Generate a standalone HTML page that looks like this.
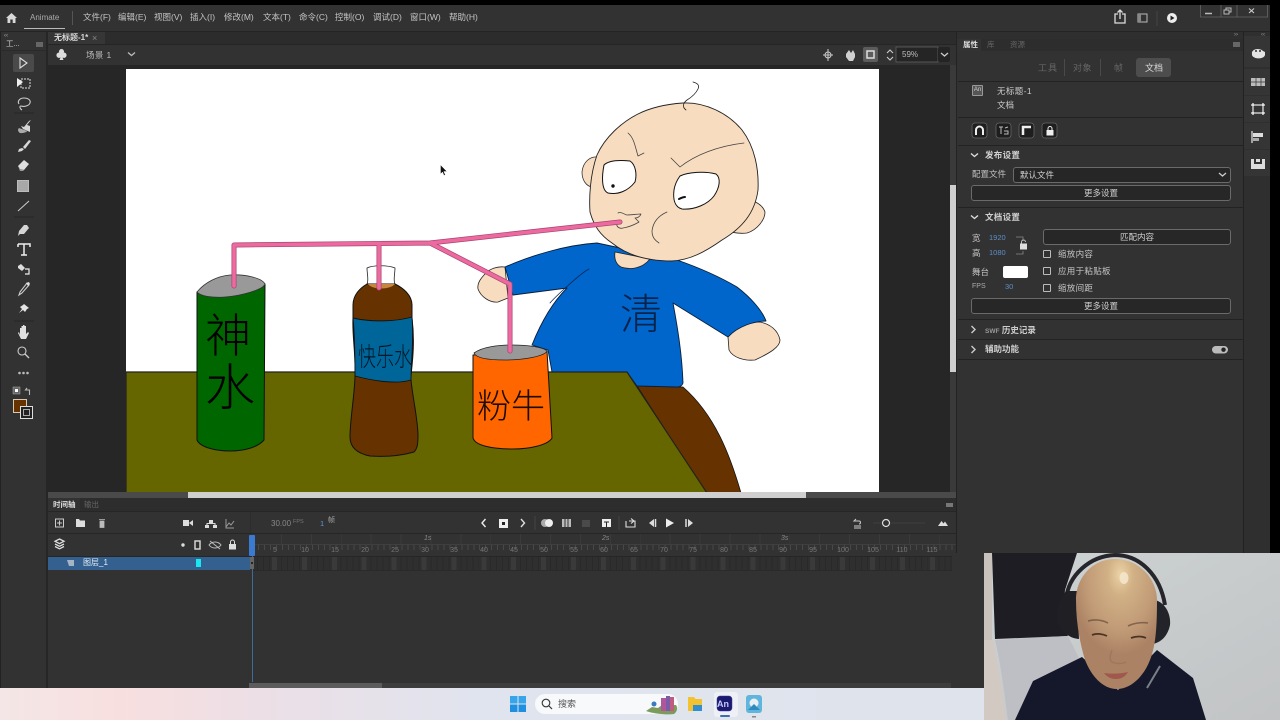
<!DOCTYPE html>
<html><head><meta charset="utf-8"><style>
html,body{margin:0;padding:0;width:1280px;height:720px;overflow:hidden;background:#000}
#r{position:relative;width:1280px;height:720px;overflow:hidden;background:#323232;font-family:"Liberation Sans","Noto Sans CJK SC",sans-serif;filter:blur(.35px)}
.b{position:absolute}
.t{position:absolute;white-space:nowrap;font-size:8.5px;line-height:12px;color:#c4c4c4}
.s{position:absolute;background:#222;height:1px;left:958px;width:285px}
.btn{position:absolute;box-sizing:border-box;background:#272727;border:1px solid #6a6a6a;border-radius:3px;text-align:center;color:#d0d0d0;font-size:8.5px}
.ck{position:absolute;box-sizing:border-box;width:8px;height:8px;border:1px solid #bbb;border-radius:1px;left:1043px}
.n{position:absolute;top:546px;font-size:7px;line-height:10px;color:#777;width:20px;text-align:center}
svg{position:absolute;overflow:visible}
</style></head><body><div id="r">

<div class="b" style="left:0;top:0;width:1280px;height:5px;background:#000"></div>
<div class="b" style="left:0;top:5px;width:1270px;height:26px;background:#323232"></div>
<div class="b" style="left:0;top:31px;width:1270px;height:1px;background:#242424"></div>
<div class="b" style="left:1270px;top:0;width:10px;height:553px;background:#000"></div>

<!-- title bar -->
<svg style="left:0;top:0" width="80" height="32"><path d="M6 18l5.500-5 5.500 5h-1.500v5h-2.800v-3.500h-2.400V23H7.500v-5z" fill="#d8d8d8"/></svg>
<div class="t" style="left:30px;top:12px;font-size:8px;color:#aaa">Animate</div>
<div class="b" style="left:24px;top:28px;width:41px;height:1px;background:#bbb"></div>
<div class="b" style="left:72px;top:11px;width:1px;height:14px;background:#555"></div>
<div class="t" style="left:83px;top:11px">文件(F)</div>
<div class="t" style="left:118px;top:11px">编辑(E)</div>
<div class="t" style="left:154px;top:11px">视图(V)</div>
<div class="t" style="left:190px;top:11px">插入(I)</div>
<div class="t" style="left:224px;top:11px">修改(M)</div>
<div class="t" style="left:263px;top:11px">文本(T)</div>
<div class="t" style="left:299px;top:11px">命令(C)</div>
<div class="t" style="left:335px;top:11px">控制(O)</div>
<div class="t" style="left:373px;top:11px">调试(D)</div>
<div class="t" style="left:410px;top:11px">窗口(W)</div>
<div class="t" style="left:449px;top:11px">帮助(H)</div>

<svg style="left:1100px;top:5px" width="170" height="26">
<path d="M18 9h-3v9h10V9h-3M20 14V5M17.500 7.500L20 5l2.500 2.500" fill="none" stroke="#ddd" stroke-width="1.300"/>
<rect x="38" y="9" width="9" height="8" fill="none" stroke="#bbb"/><rect x="38" y="9" width="3" height="8" fill="#888"/>
<path d="M57 6v15" stroke="#444"/>
<circle cx="72" cy="13" r="5" fill="#eee"/><path d="M70.500 10.500v5l4-2.500z" fill="#222"/>
<path d="M100.500 0v12h67V0M121 0v12M137 0v12" fill="none" stroke="#666" stroke-width=".8"/>
<path d="M105 8.500h7" stroke="#bbb" stroke-width="1.500"/><path d="M124 5h5v4h-5zM126 5V3h5v4h-2" fill="none" stroke="#bbb"/><path d="M149 3.500l5 4.500M154 3.500l-5 4.500" stroke="#ccc" stroke-width="1.100"/>
</svg>

<!-- doc tab row -->
<div class="b" style="left:48px;top:32px;width:908px;height:13px;background:#2c2c2c"></div>
<div class="b" style="left:48px;top:32px;width:57px;height:13px;background:#363636"></div>
<div class="t" style="left:54px;top:32px;color:#d8d8d8;font-weight:700;font-size:8px">无标题-1*</div>
<div class="t" style="left:92px;top:32px;color:#888;font-size:9px">×</div>
<div class="b" style="left:48px;top:45px;width:908px;height:20px;background:#323232"></div>
<div class="b" style="left:48px;top:44px;width:908px;height:1px;background:#252525"></div>
<svg style="left:55px;top:48px" width="14" height="14"><path d="M6.500 1a2.500 2.500 0 0 1 2.300 3.500A2.700 2.700 0 1 1 7.500 9.500L8.500 12h-4L5.500 9.500A2.700 2.700 0 1 1 4.200 4.500 2.500 2.500 0 0 1 6.500 1z" fill="#ddd"/></svg>
<div class="t" style="left:86px;top:49px;color:#bbb;letter-spacing:.4px">场景 1</div>
<svg style="left:127px;top:51px" width="9" height="7"><path d="M1 1.500l3.500 3 3.500-3" fill="none" stroke="#bbb" stroke-width="1.300"/></svg>

<svg style="left:820px;top:46px" width="135" height="18">
<path d="M8 3v12M3 9h10" stroke="#ccc"/><circle cx="8" cy="9" r="3" fill="none" stroke="#ccc"/>
<path d="M26 8l3-4 2 3 2-3 2 4v3l-2 4h-4l-3-4zM27 5l-2 2M37 5l2 2" fill="#cfcfcf"/>
<rect x="43" y="1" width="15" height="15" rx="2" fill="#5c5c5c"/><rect x="47" y="5" width="7" height="7" fill="none" stroke="#ddd" stroke-width="1.500"/>
<path d="M67 7l3-3 3 3M67 11l3 3 3-3" fill="none" stroke="#ccc" stroke-width="1.100"/>
<rect x="76" y="1" width="42" height="15" fill="#252525" stroke="#666" stroke-width=".7"/>
<rect x="118" y="1" width="12" height="15" rx="2" fill="#242424"/><path d="M121 7l3.500 3 3.500-3" fill="none" stroke="#ccc" stroke-width="1.300"/>
</svg>
<div class="t" style="left:902px;top:49px;font-size:8px;color:#bbb">59%</div>

<!-- left toolbar -->
<div class="b" style="left:0;top:32px;width:1px;height:656px;background:#222"></div>
<div class="b" style="left:46px;top:32px;width:2px;height:656px;background:#262626"></div>
<div class="t" style="left:4px;top:30px;font-size:6px;color:#aaa">‹‹</div>
<div class="t" style="left:6px;top:38px;font-size:7.500px;color:#ccc">工...</div>
<div class="b" style="left:36px;top:42px;width:7px;height:5px;background:#666"></div>
<div class="b" style="left:0;top:50px;width:46px;height:1px;background:#2a2a2a"></div>
<svg style="left:0;top:50px" width="46" height="380">
<rect x="13" y="4" width="21" height="18" rx="2" fill="#4a4a4a"/>
<path d="M20 8v10l7-5z" fill="none" stroke="#ddd" stroke-width="1.100"/>
<path d="M21 29h9v9h-9z" fill="none" stroke="#ddd" stroke-dasharray="2 1"/><path d="M17 28l6 4-6 5z" fill="#eee"/>
<path d="M19 54c-2-3 1-6 5-6s7 2 6 5-6 4-9 3c-2 0-1 3 1 4" fill="none" stroke="#ccc" stroke-width="1.100"/>
<path d="M14 63h20" stroke="#262626"/>
<path d="M29 71l-5 6-3-1 2 3 7 3v-6l-3-1 4-5z" fill="#d5d5d5"/><path d="M19 78a3 3 0 0 0 3 5c2 0 5-1 5-2z" fill="#aaa"/>
<path d="M29 90l-6 7 2 2 6-8zM22 98l-3 1-1 3 4-1 2-2z" fill="#d8d8d8"/>
<path d="M24 110l5 4-5 6-4-1-2-3z" fill="#dedede"/><path d="M18 116l2 3 4 1-1 1h-3z" fill="#999"/>
<rect x="18" y="131" width="10" height="10" fill="#a8a8a8"/><rect x="17.500" y="130.500" width="11" height="11" fill="none" stroke="#bbb"/>
<path d="M18 161l11-10" stroke="#ccc"/><path d="M14 167h20" stroke="#262626"/>
<path d="M27 175l2 3-5 6h-4l-2 2 1-5 5-6z" fill="#d5d5d5"/>
<path d="M18 194h12v3M24 194v11M21 205h6M18 194v3" fill="none" stroke="#eee" stroke-width="1.500"/>
<path d="M18 216l3-2 4 4-3 3-4-3z" fill="#ddd"/><path d="M25 219h4v5h-4" fill="none" stroke="#eee" stroke-width="1.200"/>
<path d="M28 233l1 2-7 8-3 2 1-3 7-9z" fill="none" stroke="#ccc" stroke-width="1.100"/><path d="M26 233l3-1 1 2-2 2z" fill="#ddd"/>
<path d="M24 254l5 4-2 1-2 3-2-2-4 3 3-4-2-2 3-2z" fill="#e4e4e4"/>
<path d="M14 271h20" stroke="#262626"/>
<path d="M20 285v-7h1.500v5-7h1.500v6-7h1.500v7-6h1.500v8l2-2 1 1-3 6h-5l-3-6 1-1z" fill="#e0e0e0"/>
<circle cx="22" cy="301" r="4" fill="none" stroke="#ccc" stroke-width="1.100"/><path d="M25 304l4 4" stroke="#ccc" stroke-width="1.300"/>
<circle cx="19.500" cy="323" r="1.300" fill="#bbb"/><circle cx="23.500" cy="323" r="1.300" fill="#bbb"/><circle cx="27.500" cy="323" r="1.300" fill="#bbb"/>
<rect x="13" y="337" width="7" height="7" fill="#666" stroke="#aaa" stroke-width=".5"/><rect x="15" y="339" width="3" height="3" fill="#fff"/>
<path d="M27 338l-1.500 2h4v5" fill="none" stroke="#bbb" stroke-width="1.100"/>
<rect x="13.500" y="349.500" width="13" height="13" fill="#663300" stroke="#d9c8b0"/>
<rect x="20.500" y="356.500" width="12" height="12" fill="#222" stroke="#ddd"/><rect x="23.500" y="359.500" width="6" height="6" fill="none" stroke="#aaa"/>
</svg>

<!-- pasteboard -->
<div class="b" style="left:48px;top:65px;width:902px;height:427px;background:#262626"></div>

<!-- stage -->
<svg style="left:0;top:0" width="1280" height="720" viewBox="0 0 1280 720">
<defs><clipPath id="st"><rect x="126" y="69" width="753" height="423"/></clipPath></defs>
<g clip-path="url(#st)" stroke-linejoin="round" stroke-linecap="round">
<rect x="126" y="69" width="753" height="423" fill="#fff"/>
<!-- legs -->
<path d="M637 386L683 387C715 415 730 455 741 493H706z" fill="#663300" stroke="#111" stroke-width=".8"/>
<!-- left hand -->
<path d="M505 267C497 266 490 269 486 273 481 278 477 283 478 289 481 297 490 303 498 302L508 298z" fill="#f7dcc0" stroke="#222" stroke-width=".8"/>
<!-- right hand -->
<path d="M728 337C738 326 750 322 760 322 770 324 778 330 780 340 780 347 770 353 755 360 745 361 733 358 729 350z" fill="#f7dcc0" stroke="#222" stroke-width=".8"/>
<!-- body -->
<path d="M505 267C530 256 565 245 597 243L677 260C700 268 720 277 737 287 750 297 762 310 766 321 755 321 738 326 728 337L673 303C678 330 682 355 683 383 682 386 680 387 677 387L637 386 627 372H552L548 350 532 345C540 325 552 303 567 288L513 295z" fill="#0066cc" stroke="#0b1f3a" stroke-width=".9"/>
<path d="M550 303C555 297 582 272 589 269" fill="none" stroke="#0a2550" stroke-width=".8"/>
<!-- neck -->
<path d="M615 252C614 259 616 264 621 267 630 270 642 269 650 259z" fill="#f7dcc0" stroke="#222" stroke-width=".8"/>
<!-- right ear -->
<path d="M740 200C750 198 762 203 765 212 765 220 757 230 747 233 738 234 730 232 725 230z" fill="#f7dcc0" stroke="#222" stroke-width=".8"/>
<!-- left ear -->
<path d="M598 157C590 156 583 162 582 172 582 180 586 186 592 187z" fill="#f7dcc0" stroke="#333" stroke-width=".8"/>
<!-- head -->
<path d="M683 103C705 102 728 113 742 130 755 147 759 170 758 190 755 213 742 228 722 240 705 252 690 260 672 261 650 261 628 256 612 243 600 235 594 226 590 212 589 198 590 175 597 155 605 137 622 122 638 114 652 107 668 104 683 103z" fill="#f7dcc0" stroke="#222" stroke-width=".9"/>
<path d="M686 110c-4-3-3-7 1-10 5-3 9-7 11-11 2-4-1-6-5-7" fill="none" stroke="#222" stroke-width=".8"/>
<path d="M628 133C634 138 635 146 638 156L644 153" fill="none" stroke="#444" stroke-width=".8"/>
<path d="M671 158L680 167C695 155 718 146 744 143" fill="none" stroke="#444" stroke-width=".8"/>
<!-- eyes -->
<path d="M604 165C609 160 620 160 630 161 636 165 637 175 635 182 628 191 618 195 608 193 601 190 602 175 604 165z" fill="#fff" stroke="#111" stroke-width="1"/>
<circle cx="613" cy="186" r="1.700" fill="#111"/>
<path d="M680 176C688 172 705 171 716 174 721 178 720 187 714 196 708 204 695 210 682 209 674 207 673 198 674 190 675 184 677 180 680 176z" fill="#fff" stroke="#111" stroke-width="1"/>
<path d="M679 199c2-1 4-2 6-2" stroke="#111" stroke-width="2" fill="none"/>
<!-- mouth/cheek -->
<path d="M618 213c3-2 7 2 9 2 5 0 10-1 14-1-1 3-4 4-6 4 2 2 3 3 4 4-5 3-10 5-16 6-3 1-7-1-6-4" fill="#f7dcc0" stroke="#444" stroke-width=".8"/>
<path d="M667 212C658 216 653 222 652 231 652 238 656 241 659 243" fill="none" stroke="#444" stroke-width=".8"/>
<!-- table -->
<path d="M126 372H627L707 493H126z" fill="#666600" stroke="#222" stroke-width="1.200"/>
<!-- can green -->
<path d="M197 292V440C200 447 215 451 230 451 245 451 258 447 264 440L265 284z" fill="#006600" stroke="#111" stroke-width="1"/>
<path d="M197 292C205 282 218 276 230 275 245 274 262 278 265 284 263 290 240 296 225 297 212 298 200 296 197 292z" fill="#999" stroke="#333" stroke-width=".8"/>
<!-- bottle -->
<path d="M367 284C369 280 367 274 367 268 373 265 388 265 395 268 395 274 393 280 395 284z" fill="#fff" stroke="#222" stroke-width=".8"/>
<path d="M367 284H395C403 288 412 295 412 305V318C416 350 410 375 411 380 413 400 418 420 418 436 418 445 417 449 414 452 400 456 385 457 370 456 355 453 350 446 350 437 350 420 354 400 355 377 356 355 352 335 353 318V305C353 295 360 288 367 284z" fill="#663300" stroke="#111" stroke-width="1"/>
<path d="M368 284C372 290 390 290 395 284z" fill="#c8853f"/>
<path d="M353 318C370 322 395 322 412 317 414 340 411 360 411 380 395 385 370 380 355 376 355 360 355 338 353 318z" fill="#006699" stroke="#111" stroke-width=".9"/>
<!-- orange can -->
<path d="M473 355V438C475 445 490 449 513 449 530 449 548 445 552 438L547 351z" fill="#ff6600" stroke="#111" stroke-width="1"/>
<path d="M474 353C482 347 498 345 512 345 528 345 543 347 547 351 545 356 525 360 505 360 488 360 476 358 474 353z" fill="#999" stroke="#222" stroke-width=".8"/>
<!-- handwriting (real text) -->
<text x="205" y="352" font-family="'Noto Sans CJK SC','WenQuanYi Zen Hei',sans-serif" font-weight="300" font-size="46" fill="#000">神</text>
<text x="205" y="405" font-family="'Noto Sans CJK SC','WenQuanYi Zen Hei',sans-serif" font-weight="300" font-size="50" fill="#000">水</text>
<text x="358" y="366" textLength="54" lengthAdjust="spacingAndGlyphs" font-family="'Noto Sans CJK SC',sans-serif" font-weight="300" font-size="26" fill="#00182a">快乐水</text>
<text x="477" y="418" font-family="'Noto Sans CJK SC',sans-serif" font-weight="300" font-size="34" fill="#1a0a00">粉牛</text>
<text x="620" y="329" font-family="'Noto Sans CJK SC',sans-serif" font-weight="300" font-size="42" fill="#08234a">清</text>
<!-- straws -->
<g fill="none">
<path d="M234 286V245L430 243 620 222M379 288V244M430 243L510 284V351" stroke="#a8456f" stroke-width="5"/>
<path d="M234 286V245L430 243 620 222M379 288V244M430 243L510 284V351" stroke="#ec6aa0" stroke-width="3.600"/>
</g>
<!-- cursor -->
<path d="M440.500 165v9l2-2 1.500 3.500 1.300-.6-1.500-3.400h3z" fill="#111" stroke="#fff" stroke-width=".4"/>
</g>
</svg>

<!-- scrollbars -->
<div class="b" style="left:48px;top:492px;width:908px;height:6px;background:#4a4a4a"></div>
<div class="b" style="left:188px;top:492px;width:618px;height:6px;background:#cfcfcf"></div>
<div class="b" style="left:950px;top:65px;width:6px;height:427px;background:#3a3a3a"></div>
<div class="b" style="left:950px;top:185px;width:6px;height:187px;background:#cfcfcf"></div>

<!-- timeline -->
<div class="b" style="left:48px;top:498px;width:908px;height:190px;background:#323232"></div>
<div class="b" style="left:48px;top:498px;width:908px;height:13px;background:#2d2d2d"></div>
<div class="b" style="left:48px;top:498px;width:32px;height:13px;background:#323232"></div>
<div class="t" style="left:53px;top:499px;font-size:7.500px;color:#ddd;font-weight:700">时间轴</div>
<div class="t" style="left:84px;top:499px;font-size:7.500px;color:#666">输出</div>
<div class="b" style="left:946px;top:503px;width:7px;height:4px;background:#777"></div>
<div class="b" style="left:48px;top:511px;width:908px;height:1px;background:#262626"></div>
<svg style="left:48px;top:512px" width="908" height="22">
<rect x="7.500" y="7" width="8" height="8" fill="none" stroke="#ccc"/><path d="M9 11h5M11.500 8.500v5" stroke="#ccc"/>
<path d="M28 7h3l1 1.500h5V15h-9z" fill="#ddd"/>
<path d="M51 7.500h6M52 9h4v6.500h-4z" fill="#bbb" stroke="#bbb" stroke-width=".8"/>
<rect x="135" y="8" width="6" height="6" fill="#ddd"/><path d="M141 11l4-3v6z" fill="#ddd"/>
<path d="M161 8h4v3h-4zM157 13h4v3h-4zM165 13h4v3h-4z" fill="#ddd"/><path d="M159 13v-1.500h8V13" fill="none" stroke="#ddd"/>
<path d="M178 7v9h8M178 15l3-4 2 2 3-4" fill="none" stroke="#999"/>
<path d="M437.500 7l-3.500 4 3.500 4" fill="none" stroke="#eee" stroke-width="1.400"/>
<rect x="451" y="7" width="9" height="9" fill="#eee"/><rect x="454" y="10" width="3" height="3" fill="#222"/>
<path d="M473 7l3.500 4-3.500 4" fill="none" stroke="#ddd" stroke-width="1.400"/>
<path d="M487 4v14" stroke="#444"/>
<circle cx="497" cy="11" r="4" fill="#aaa"/><circle cx="501" cy="11" r="4" fill="#eee"/>
<rect x="514" y="7" width="9" height="8" fill="#bbb"/><path d="M517 7v8M520 7v8" stroke="#333"/>
<rect x="534" y="8" width="8" height="7" fill="#4a4a4a"/>
<rect x="554" y="7" width="9" height="8" fill="#eee"/><path d="M556 10h5M558.500 10v5" stroke="#222"/>
<path d="M571 4v14" stroke="#444"/>
<path d="M578 9v6h9V9h-2M581 9h4M583 6.500l3 2.500-3 2.500" fill="none" stroke="#ddd" stroke-width="1.100"/>
<path d="M606 7l-5 4 5 4z" fill="#ddd"/><path d="M607.500 7v8" stroke="#ddd" stroke-width="1.500"/>
<path d="M618 6.500l8 4.500-8 4.500z" fill="#eee"/>
<path d="M638 7v8" stroke="#ddd" stroke-width="1.500"/><path d="M640 7l5 4-5 4z" fill="#ddd"/>
<path d="M806 14h7M806 16h7M808 7l-2 2h5c2 0 2 3 0 3" fill="none" stroke="#ccc"/>
<path d="M825 11h52" stroke="#3e3e3e"/><circle cx="838" cy="11" r="3.500" fill="#323232" stroke="#ddd" stroke-width="1.200"/>
<path d="M890 14l3.500-5 2 2.500 1.500-2 3 4.500z" fill="#ddd"/>
</svg>
<div class="b" style="left:250px;top:512px;width:1px;height:22px;background:#2c2c2c"></div>
<div class="t" style="left:271px;top:518px;font-size:8px;color:#888">30.00</div>
<div class="t" style="left:293px;top:516px;font-size:5.500px;color:#777">FPS</div>
<div class="t" style="left:320px;top:518px;font-size:7.500px;color:#5b95d6">1</div>
<div class="t" style="left:328px;top:515px;font-size:7px;color:#aaa">帧</div>

<div class="b" style="left:48px;top:533px;width:908px;height:1px;background:#262626"></div>
<svg style="left:48px;top:534px" width="204" height="36">
<path d="M11.500 5l4.500 2.300-4.500 2.300L7 7.300zM7 10l4.500 2.300L16 10M7 12.500l4.500 2.300 4.500-2.300" fill="none" stroke="#ddd" stroke-width="1.300"/>
<circle cx="135" cy="11" r="1.700" fill="#ddd"/>
<rect x="147" y="7" width="5" height="8" fill="none" stroke="#ddd" stroke-width="1.400"/>
<path d="M161 11c3-4 9-4 12 0-3 4-9 4-12 0zM162 7l10 8" fill="none" stroke="#bbb"/>
<rect x="181" y="10" width="7" height="5.500" fill="#ddd"/><path d="M182.500 10V8a2 2 0 0 1 4 0v2" fill="none" stroke="#ddd"/>
</svg>
<div class="b" style="left:48px;top:556px;width:204px;height:1px;background:#262626"></div>
<div class="b" style="left:48px;top:557px;width:202px;height:12.500px;background:#34608f"></div>
<svg style="left:65px;top:559px" width="12" height="9"><path d="M2 1h7v6H4z" fill="#a4b4c4"/></svg>
<div class="t" style="left:83px;top:557px;font-size:8px;color:#e8f0f8;text-decoration:none">图层_1</div>
<div class="b" style="left:196px;top:559px;width:5px;height:8px;background:#19e8f2"></div>

<!-- ruler -->
<div class="b" style="left:252px;top:534px;width:704px;height:22px;background:#323232"></div>
<div class="b" style="left:252px;top:534px;width:704px;height:10px;background:repeating-linear-gradient(90deg,transparent 0 29px,#3a3a3a 29px 29.900px)"></div>
<div class="b" style="left:252px;top:544px;width:704px;height:1px;background:#3f3f3f"></div>
<div class="b" style="left:252px;top:545px;width:704px;height:5px;background:repeating-linear-gradient(90deg,#484848 0 1px,transparent 1px 5.980px)"></div>
<div class="t" style="left:424px;top:534px;font-size:7px;font-style:italic;color:#888;line-height:10px">1s</div>
<div class="t" style="left:602px;top:534px;font-size:7px;font-style:italic;color:#888;line-height:10px">2s</div>
<div class="t" style="left:781px;top:534px;font-size:7px;font-style:italic;color:#888;line-height:10px">3s</div>
<div class="n" style="left:265px">5</div><div class="n" style="left:295px">10</div><div class="n" style="left:325px">15</div><div class="n" style="left:355px">20</div><div class="n" style="left:385px">25</div><div class="n" style="left:415px">30</div><div class="n" style="left:444px">35</div><div class="n" style="left:474px">40</div><div class="n" style="left:504px">45</div><div class="n" style="left:534px">50</div><div class="n" style="left:564px">55</div><div class="n" style="left:594px">60</div><div class="n" style="left:624px">65</div><div class="n" style="left:654px">70</div><div class="n" style="left:683px">75</div><div class="n" style="left:714px">80</div><div class="n" style="left:743px">85</div><div class="n" style="left:773px">90</div><div class="n" style="left:803px">95</div><div class="n" style="left:833px">100</div><div class="n" style="left:863px">105</div><div class="n" style="left:892px">110</div><div class="n" style="left:922px">115</div>
<!-- frames -->
<div class="b" style="left:252px;top:556px;width:700px;height:1px;background:#262626"></div>
<div class="b" style="left:252px;top:557px;width:700px;height:13px;background:repeating-linear-gradient(90deg,#2f2f2f 0 5px,#292929 5px 5.980px)"></div>
<div class="b" style="left:252px;top:557px;width:700px;height:13px;background:repeating-linear-gradient(90deg,transparent 0 20px,#3a3a3a 20px 25px,transparent 25px 29.900px)"></div>
<div class="b" style="left:252px;top:570px;width:700px;height:1px;background:#2a2a2a"></div>
<!-- playhead -->
<div class="b" style="left:251.500px;top:556px;width:1px;height:126px;background:#3f6a99"></div>
<div class="b" style="left:249px;top:535px;width:6px;height:21px;background:#3a7ad0;border-radius:1px"></div>
<div class="b" style="left:250px;top:557px;width:4px;height:12px;background:#666"></div>
<div class="b" style="left:251px;top:562px;width:2px;height:2px;background:#111;border-radius:50%"></div>
<!-- timeline scroll -->
<div class="b" style="left:249px;top:683px;width:702px;height:5px;background:#3d3d3d"></div>
<div class="b" style="left:249px;top:683px;width:133px;height:5px;background:#5c5c5c"></div>

<!-- right panel -->
<div class="b" style="left:956px;top:32px;width:1px;height:656px;background:#232323"></div>
<div class="b" style="left:957px;top:32px;width:286px;height:7px;background:#2f2f2f"></div>
<div class="b" style="left:1243px;top:32px;width:1px;height:521px;background:#222"></div>
<div class="b" style="left:1244px;top:32px;width:26px;height:521px;background:#2f2f2f"></div>
<div class="b" style="left:957px;top:39px;width:286px;height:12px;background:#2d2d2d"></div>
<div class="b" style="left:957px;top:39px;width:24px;height:12px;background:#333"></div>
<div class="t" style="left:963px;top:39px;font-size:7.500px;color:#ddd;font-weight:700">属性</div>
<div class="t" style="left:987px;top:39px;font-size:7.500px;color:#666">库</div>
<div class="t" style="left:1010px;top:39px;font-size:7.500px;color:#666">资源</div>
<div class="b" style="left:1233px;top:42px;width:7px;height:5px;background:#666"></div>
<div class="t" style="left:1234px;top:29px;font-size:6px;color:#999">››</div>
<div class="t" style="left:1261px;top:29px;font-size:6px;color:#999">‹‹</div>

<div class="t" style="left:1038px;top:62px;font-size:9px;color:#666;letter-spacing:1px">工具</div>
<div class="b" style="left:1064px;top:59px;width:1px;height:17px;background:#4a4a4a"></div>
<div class="t" style="left:1073px;top:62px;font-size:9px;color:#666;letter-spacing:.5px">对象</div>
<div class="b" style="left:1100px;top:59px;width:1px;height:17px;background:#4a4a4a"></div>
<div class="t" style="left:1114px;top:62px;font-size:9px;color:#666">帧</div>
<div class="b" style="left:1136px;top:58px;width:35px;height:19px;background:#4d4d4d;border-radius:3px"></div>
<div class="t" style="left:1145px;top:62px;font-size:9px;color:#ddd">文档</div>
<div class="s" style="top:81px"></div>
<div class="b" style="left:972px;top:85px;width:9px;height:9px;border:1px solid #999;background:#555;border-radius:1px;font-size:6px;line-height:9px;color:#ccc;text-align:center">An</div>
<div class="t" style="left:997px;top:85px;color:#ccc;letter-spacing:.4px">无标题-1</div>
<div class="t" style="left:997px;top:99px;color:#ccc">文档</div>
<div class="s" style="top:117px"></div>
<svg style="left:970px;top:122px" width="90" height="18">
<g fill="#1e1e1e" stroke="#666" stroke-width=".8"><rect x="2" y="1" width="15" height="15" rx="3"/><rect x="26" y="1" width="15" height="15" rx="3"/><rect x="49" y="1" width="15" height="15" rx="3"/><rect x="72" y="1" width="15" height="15" rx="3"/></g>
<path d="M6 13V8a3.500 3.500 0 0 1 7 0v5" fill="none" stroke="#eee" stroke-width="2"/>
<path d="M29 5h4M31 5v7M35 6l3-1M34 9h4v3h-4" fill="none" stroke="#bbb"/>
<path d="M53 13V5h8" fill="none" stroke="#eee" stroke-width="2.500"/>
<rect x="76.500" y="8" width="7" height="5.500" fill="#eee"/><path d="M78 8V6.500a2 2 0 0 1 4 0V8" fill="none" stroke="#eee"/>
</svg>
<div class="s" style="top:145px"></div>
<svg style="left:970px;top:150px" width="10" height="10"><path d="M1 3.500l3.500 3 3.500-3" fill="none" stroke="#ddd" stroke-width="1.400"/></svg>
<div class="t" style="left:985px;top:149px;color:#d0d0d0;font-weight:700;letter-spacing:.3px">发布设置</div>
<div class="t" style="left:972px;top:168px;color:#c0c0c0">配置文件</div>
<div class="btn" style="left:1013px;top:167px;width:218px;height:16px;text-align:left;padding-left:6px;line-height:14px;background:#262626">默认文件</div>
<svg style="left:1218px;top:171px" width="9" height="8"><path d="M1 2l3.500 3 3.500-3" fill="none" stroke="#ccc" stroke-width="1.300"/></svg>
<div class="btn" style="left:971px;top:185px;width:260px;height:16px;line-height:14px">更多设置</div>
<div class="s" style="top:207px"></div>
<svg style="left:970px;top:212px" width="10" height="10"><path d="M1 3.500l3.500 3 3.500-3" fill="none" stroke="#ddd" stroke-width="1.400"/></svg>
<div class="t" style="left:985px;top:211px;color:#d0d0d0;font-weight:700;letter-spacing:.3px">文档设置</div>
<div class="t" style="left:972px;top:232px">宽</div>
<div class="t" style="left:989px;top:232px;font-size:7.500px;color:#5b8fc8">1920</div>
<div class="t" style="left:972px;top:247px">高</div>
<div class="t" style="left:989px;top:247px;font-size:7.500px;color:#5b8fc8">1080</div>
<svg style="left:1014px;top:234px" width="16" height="24"><path d="M2 3h7v4M2 20h7v-3" fill="none" stroke="#888" stroke-width=".8"/><rect x="6" y="9.500" width="7" height="6" fill="#ddd"/><path d="M7.500 9.500V8a2 2 0 0 1 4 0" fill="none" stroke="#bbb"/></svg>
<div class="btn" style="left:1043px;top:229px;width:188px;height:16px;line-height:14px">匹配内容</div>
<div class="ck" style="top:250px"></div><div class="t" style="left:1058px;top:248px;letter-spacing:.3px">缩放内容</div>
<div class="ck" style="top:267px"></div><div class="t" style="left:1058px;top:265px;letter-spacing:.3px">应用于粘贴板</div>
<div class="ck" style="top:284px"></div><div class="t" style="left:1058px;top:282px;letter-spacing:.3px">缩放间距</div>
<div class="t" style="left:972px;top:266px">舞台</div>
<div class="b" style="left:1003px;top:266px;width:25px;height:12px;background:#fff;border-radius:2px"></div>
<div class="t" style="left:972px;top:281px;font-size:7px;color:#aaa">FPS</div>
<div class="t" style="left:1005px;top:281px;font-size:7.500px;color:#5b8fc8">30</div>
<div class="btn" style="left:971px;top:298px;width:260px;height:16px;line-height:14px">更多设置</div>
<div class="s" style="top:319px"></div>
<svg style="left:970px;top:325px" width="8" height="10"><path d="M1.500 1l3.500 3.500-3.500 3.500" fill="none" stroke="#ccc" stroke-width="1.400"/></svg>
<div class="t" style="left:985px;top:324px;color:#ccc;font-weight:700"><span style="font-size:6.500px;color:#999">SWF</span> 历史记录</div>
<div class="s" style="top:339px"></div>
<svg style="left:970px;top:345px" width="8" height="10"><path d="M1.500 1l3.500 3.500-3.500 3.500" fill="none" stroke="#ccc" stroke-width="1.400"/></svg>
<div class="t" style="left:985px;top:343px;color:#d0d0d0;font-weight:700">辅助功能</div>
<svg style="left:1212px;top:345px" width="17" height="9"><rect x="0" y="1" width="16" height="7.500" rx="3.700" fill="#bbb"/><circle cx="11.500" cy="4.700" r="2.200" fill="#222"/></svg>
<div class="s" style="top:359px"></div>

<!-- right strip -->
<svg style="left:1244px;top:36px" width="26" height="150">
<g fill="#353535"><rect x="0" y="0" width="26" height="31"/><rect x="0" y="33" width="26" height="26"/><rect x="0" y="60" width="26" height="26"/><rect x="0" y="87" width="26" height="26"/><rect x="0" y="114" width="26" height="26"/></g>
<path d="M8 18a6 4 0 0 1 11-3l2 1v3a5 3 0 0 1-13-1z" fill="#e4e4e4"/>
<circle cx="12" cy="15" r="1" fill="#333"/><circle cx="16" cy="15" r="1" fill="#333"/>
<rect x="7" y="42" width="14" height="8" fill="#bbb"/><path d="M7 46h14M12 42v8M17 42v8" stroke="#333" stroke-width=".7"/>
<rect x="9" y="69" width="10" height="8" fill="none" stroke="#ddd" stroke-width="1.300"/><path d="M7 69h3M18 69h3M7 77h3M18 77h3M9 67v3M19 67v3M9 76v3M19 76v3" stroke="#eee" stroke-width="1.300"/>
<path d="M8 95v12" stroke="#ddd" stroke-width="1.300"/><rect x="9" y="97" width="10" height="4" fill="#ddd"/><rect x="9" y="102" width="6" height="3" fill="#aaa"/>
<path d="M7 123h14v10H7z" fill="#ddd"/><path d="M10 123h2v3h4v-3h2v5H10z" fill="#333"/>
</svg>

<!-- panel bottom fill -->
<div class="b" style="left:956px;top:553px;width:28px;height:135px;background:#323232"></div>

<!-- taskbar -->
<div class="b" style="left:0;top:688px;width:984px;height:32px;background:linear-gradient(90deg,#f4e6e6 0,#f8dfdf 120px,#ecdfe6 260px,#e0e4ee 480px,#dfe3ec 984px)"></div>
<svg style="left:505px;top:690px" width="265" height="30">
<g fill="#1f8fe0"><rect x="5" y="6" width="7.500" height="7.500" fill="#38a4ea"/><rect x="13.500" y="6" width="7.500" height="7.500" fill="#38a4ea"/><rect x="5" y="14.500" width="7.500" height="7.500"/><rect x="13.500" y="14.500" width="7.500" height="7.500"/></g>
<rect x="30" y="4" width="143" height="20" rx="10" fill="#f8f9fb"/>
<circle cx="41" cy="13" r="3.800" fill="none" stroke="#333" stroke-width="1.100"/><path d="M44 16l3 3" stroke="#333" stroke-width="1.200"/>
<path d="M141 21l6-4 6 1 4-3 14 0c2 3 1 7-2 9-6 1-20 0-28-3z" fill="#7c9a5c"/>
<rect x="156" y="8" width="5" height="13" fill="#b0569a"/><rect x="161" y="6" width="4" height="15" fill="#7a5ca8"/><rect x="165" y="7" width="4" height="14" fill="#c05a80"/>
<circle cx="149" cy="14" r="2.500" fill="#3a7ac0"/>
<path d="M183 7h6l1.500 2h6.500v12h-14z" fill="#f2c230"/><rect x="188" y="15" width="9" height="6" fill="#2f8fd0"/>
<rect x="209" y="2" width="24" height="25" rx="3" fill="#eef0f6"/>
<rect x="212" y="6" width="15" height="15" rx="3" fill="#1a1a6e" stroke="#3a3ab0" stroke-width=".5"/>
<rect x="215" y="25" width="10" height="2" rx="1" fill="#3b6fb0"/>
<rect x="241" y="5" width="16" height="18" rx="3" fill="#5fb5dc"/><circle cx="249" cy="13" r="4.500" fill="#e8f0f6"/><path d="M243 20l6-6 6 6z" fill="#2f8ac0"/><rect x="247" y="26" width="4" height="1.500" fill="#888"/>
</svg>
<div class="t" style="left:558px;top:698px;font-size:9px;color:#555">搜索</div>
<div class="t" style="left:717px;top:698px;font-size:9px;font-weight:700;color:#c8c8ff">An</div>

<!-- webcam -->
<svg style="left:984px;top:553px" width="296" height="167" viewBox="984 553 296 167">
<defs>
<linearGradient id="wl" x1="0" x2="1" y1="0" y2="1"><stop offset="0" stop-color="#cdd3d2"/><stop offset="1" stop-color="#c2c4c6"/></linearGradient>
<radialGradient id="hd" cx=".55" cy=".12" r=".62"><stop offset="0" stop-color="#ecd4a8"/><stop offset=".25" stop-color="#d2b186"/><stop offset=".7" stop-color="#c09a76"/><stop offset="1" stop-color="#ab8264"/></radialGradient>
</defs>
<rect x="984" y="553" width="296" height="167" fill="url(#wl)"/>
<rect x="984" y="553" width="8" height="167" fill="#c9c2bc"/>
<path d="M992 553H1077L1065 590 1062 625 1068 636 995 639z" fill="#1f1d24"/>
<path d="M995 640L1068 636 1080 660 1033 680 1018 720H1008C1004 690 1000 660 995 640z" fill="#bdbfc4"/>
<path d="M984 640v80h22c-3-25-8-55-13-80z" fill="#d2c9c2"/>
<!-- body -->
<path d="M1015 720L1033 681 1082 657 1118 690 1157 650 1193 678 1206 720z" fill="#15172a"/>
<!-- headband -->
<path d="M1066 600C1068 575 1090 556 1115 555 1140 555 1160 575 1165 605" fill="none" stroke="#25252b" stroke-width="4"/>
<!-- cups -->
<path d="M1066 591C1059 600 1056 612 1058 622 1061 631 1068 638 1079 639L1077 591z" fill="#202024"/>
<path d="M1155 600C1166 603 1171 615 1170 625 1168 635 1162 642 1153 644z" fill="#23242a"/>
<!-- head -->
<path d="M1115 559C1140 559 1157 580 1157 600 1157 625 1156 645 1150 660 1143 678 1130 689 1117 689 1102 689 1091 675 1085 660 1079 640 1076 620 1076 600 1076 578 1092 559 1115 559z" fill="url(#hd)"/>
<ellipse cx="1124" cy="578" rx="4.500" ry="6" fill="#f4e8cc" opacity=".85"/>
<path d="M1088 621c7-2 14-1 20 2M1128 626c6-3 14-4 20-3" stroke="#5a3f30" stroke-width="1.600" fill="none" opacity=".6"/>
<path d="M1092 635c5-2 11-1 15 1M1131 638c5-2 11-2 15 0" stroke="#4a3426" stroke-width="1.800" fill="none"/>
<path d="M1112 650c-2 6-3 10 0 12 4 2 10 2 14 0" stroke="#94705a" stroke-width="1.500" fill="none" opacity=".6"/>
<path d="M1104 673c7 1 16 1 24-1-3 5-7 7-12 7-5 0-9-2-12-6z" fill="#a0584c"/>
<!-- mic -->
<path d="M1147 688l13-22" stroke="#7a8088" stroke-width="2"/>
</svg>
</div></body></html>
